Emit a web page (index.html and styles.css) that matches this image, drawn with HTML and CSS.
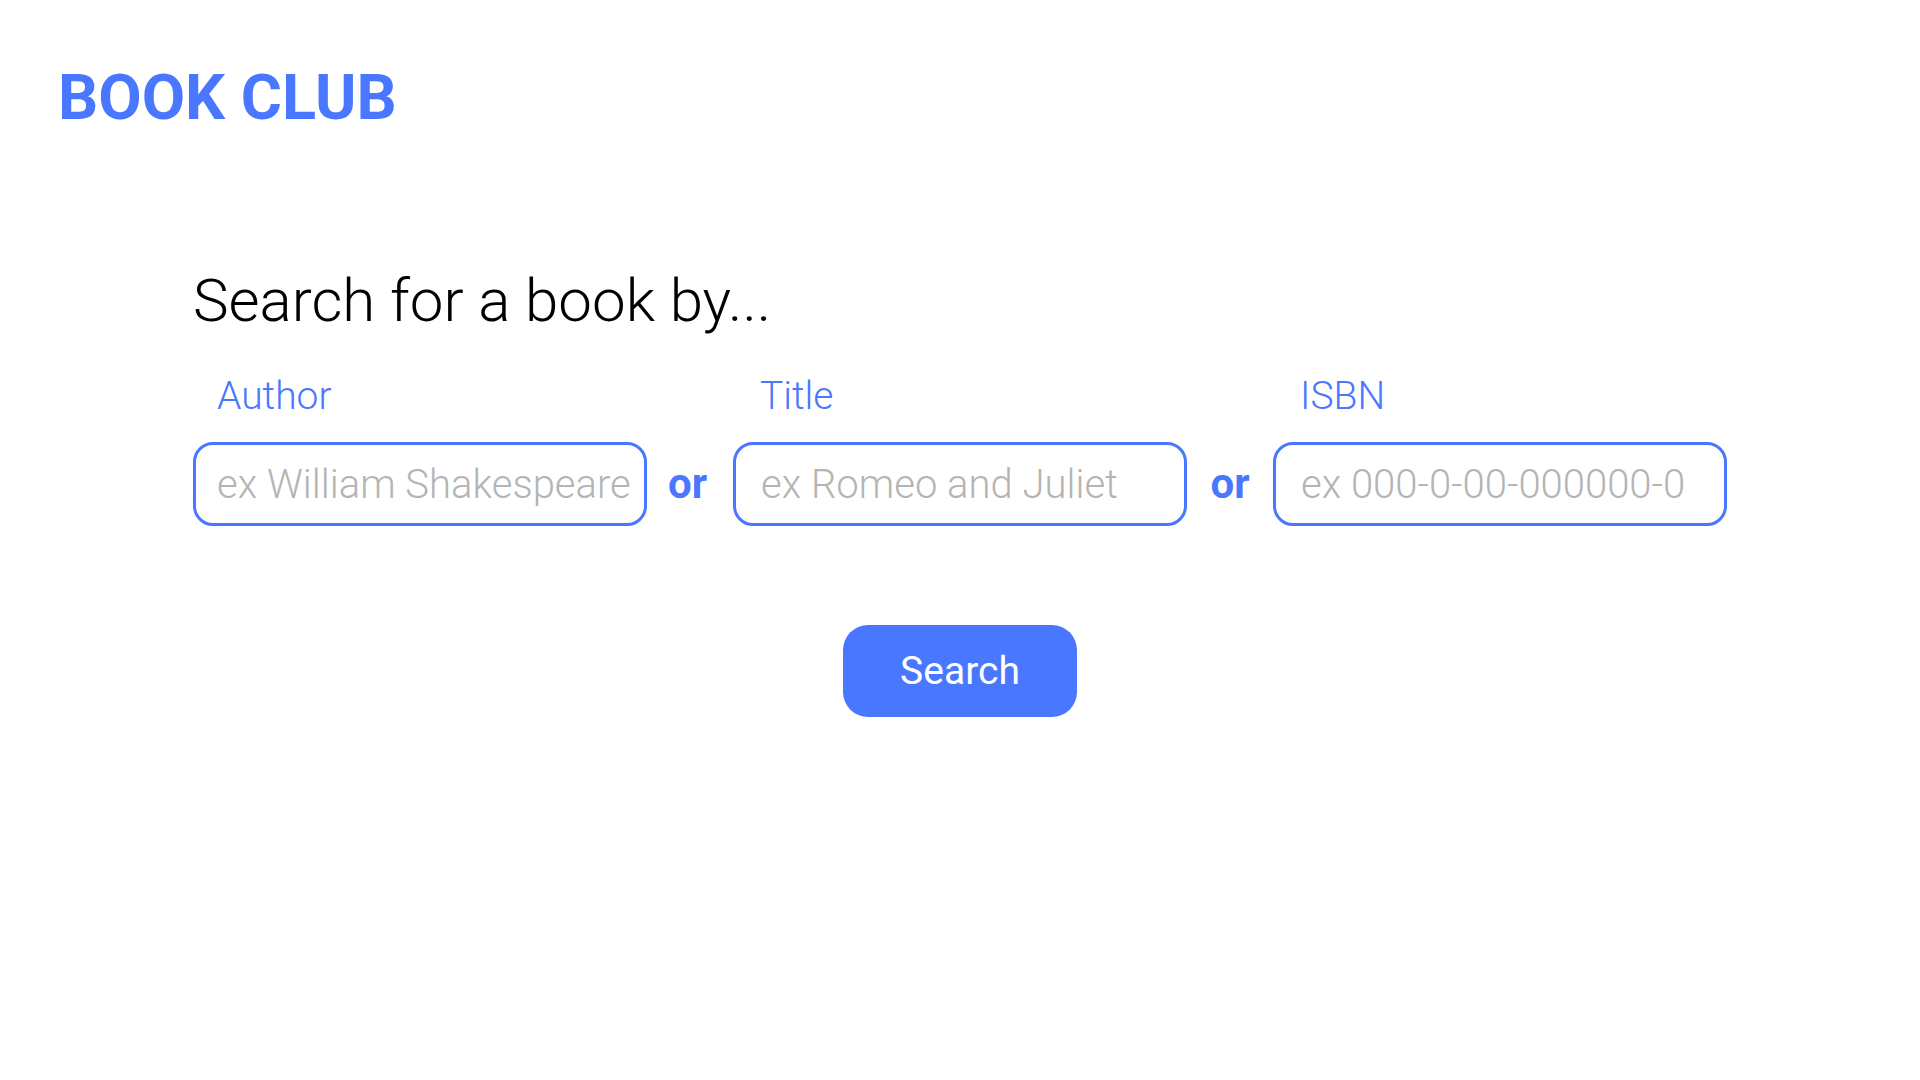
FILE: index.html
```html
<!DOCTYPE html>
<html lang="en">
<head>
<meta charset="utf-8">
<title>Book Club</title>
<link rel="stylesheet" href="styles.css">
</head>
<body>
<header class="site-header">
  <h1 class="logo">BOOK CLUB</h1>
</header>
<main class="search">
  <h2 class="search-title">Search for a book by...</h2>
  <form class="search-form" onsubmit="return false;">
    <div class="fields">
      <div class="field field--tight">
        <label class="field-label" for="author">Author</label>
        <input class="field-input" id="author" type="text" placeholder="ex William Shakespeare">
      </div>
      <div class="or or--first"><span>or</span></div>
      <div class="field">
        <label class="field-label" for="title">Title</label>
        <input class="field-input" id="title" type="text" placeholder="ex Romeo and Juliet">
      </div>
      <div class="or"><span>or</span></div>
      <div class="field">
        <label class="field-label" for="isbn">ISBN</label>
        <input class="field-input" id="isbn" type="text" placeholder="ex 000-0-00-000000-0">
      </div>
    </div>
    <div class="actions">
      <button class="search-btn" type="submit">Search</button>
    </div>
  </form>
</main>
</body>
</html>
```
FILE: styles.css
```css
* { box-sizing: border-box; }

html, body {
  margin: 0;
  padding: 0;
  background: #ffffff;
}

body {
  font-family: Roboto, "Noto Sans", sans-serif;
  color: #000000;
}

.site-header {
  padding: 66px 0 0 58px;
}

.logo {
  margin: 0;
  font-size: 63px;
  line-height: 1;
  font-weight: 700;
  color: #4a77ff;
}

.search {
  width: 1534px;
  margin: 142px auto 0;
}

.search-title {
  margin: 0;
  font-size: 60px;
  line-height: 1;
  font-weight: 300;
  color: #000000;
}

.search-form {
  margin-top: 46px;
}

.fields {
  display: flex;
  align-items: flex-end;
}

.field {
  display: flex;
  flex-direction: column;
  width: 454px;
}

.field-label {
  display: block;
  padding-left: 27px;
  font-size: 39px;
  line-height: 1;
  font-weight: 300;
  color: #4a77ff;
  margin-bottom: 26px;
}

.field-input {
  width: 100%;
  height: 84px;
  border: 3px solid #4a77ff;
  border-radius: 20px;
  padding: 0 4px 0 25px;
  font-family: Roboto, "Noto Sans", sans-serif;
  font-size: 40px;
  font-weight: 300;
  line-height: 1;
  color: #333333;
  background: #ffffff;
  outline: none;
}

.field--tight .field-label {
  padding-left: 24px;
}

.field--tight .field-input {
  padding-left: 21px;
}

.field-input::placeholder {
  color: #b4b4b4;
  opacity: 1;
}

.or {
  width: 86px;
  height: 84px;
  display: flex;
  align-items: center;
  justify-content: center;
  font-size: 42px;
  line-height: 1;
  font-weight: 700;
  color: #4a77ff;
}

.or--first {
  padding-right: 5px;
}

.actions {
  display: flex;
  justify-content: center;
  margin-top: 99px;
}

.search-btn {
  width: 234px;
  height: 92px;
  border: none;
  border-radius: 25px;
  background: #4a77ff;
  color: #ffffff;
  font-family: Roboto, "Noto Sans", sans-serif;
  font-size: 39px;
  font-weight: 400;
  line-height: 1;
  cursor: pointer;
}
```
